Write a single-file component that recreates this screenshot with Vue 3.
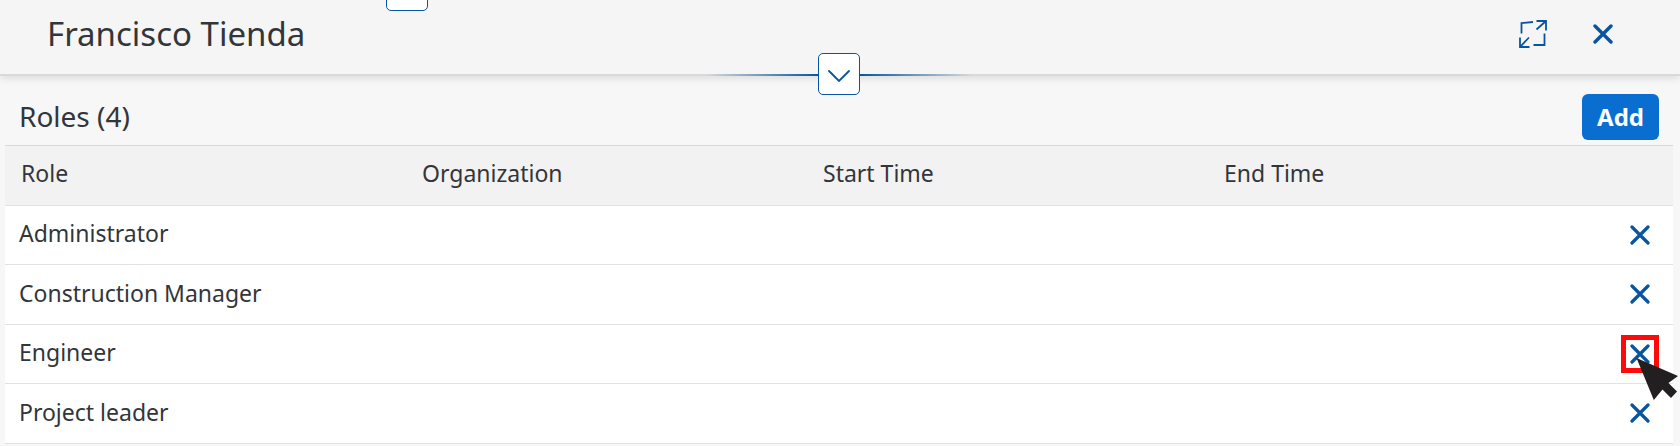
<script setup>
import { ref } from 'vue'

const columns = ['Role', 'Organization', 'Start Time', 'End Time']
const roles = ref([
  { name: 'Administrator' },
  { name: 'Construction Manager' },
  { name: 'Engineer', marked: true },
  { name: 'Project leader' },
])
</script>

<template>
  <div class="page">
    <header class="header">
      <button class="snap snap-top" type="button" aria-label="Collapse previous header"></button>
      <h1 class="title">Francisco Tienda</h1>
      <div class="actions">
        <button class="icon-button" type="button" aria-label="Full screen">
          <svg width="28" height="28" viewBox="0 0 28 28" fill="none" stroke="currentColor" stroke-width="1.8">
            <path d="M2.5 13.5V3L14 2" />
            <path d="M17.5 1H27V10.5M27 1L17.5 9.5" />
            <path d="M25.5 13.5V25H14.5" />
            <path d="M1 17.5V27H10.5M1 27L10 17.5" />
          </svg>
        </button>
        <button class="icon-button" type="button" aria-label="Close">
          <svg width="20" height="20" viewBox="0 0 20 20" fill="none" stroke="currentColor" stroke-width="3.4" stroke-linecap="round">
            <path d="M2 2L18 18M18 2L2 18" />
          </svg>
        </button>
      </div>
      <div class="divider">
        <span class="line line-left"></span>
        <button class="snap" type="button" aria-label="Expand header">
          <svg width="22" height="12" viewBox="0 0 22 12" fill="none" stroke="currentColor" stroke-width="1.8" stroke-linecap="round">
            <path d="M1 1L11 11L21 1" />
          </svg>
        </button>
        <span class="line line-right"></span>
      </div>
    </header>

    <main class="content">
      <div class="toolbar">
        <h2 class="subtitle">Roles ({{ roles.length }})</h2>
        <button class="add" type="button">Add</button>
      </div>
      <table class="table">
        <thead>
          <tr>
            <th v-for="column in columns" :key="column" scope="col">{{ column }}</th>
            <td class="action"></td>
          </tr>
        </thead>
        <tbody>
          <tr v-for="role in roles" :key="role.name">
            <td>{{ role.name }}</td>
            <td></td>
            <td></td>
            <td></td>
            <td class="action">
              <div class="action-box">
                <button class="icon-button" type="button" :aria-label="'Remove ' + role.name">
                  <svg width="20" height="20" viewBox="0 0 20 20" fill="none" stroke="currentColor" stroke-width="3.2" stroke-linecap="round">
                    <path d="M2 2L18 18M18 2L2 18" />
                  </svg>
                </button>
                <span v-if="role.marked" class="marker"></span>
                <svg v-if="role.marked" class="cursor" width="42" height="42" viewBox="0 0 42 42">
                  <path d="M0.5 0L42 18L32.5 25L41 33.5L35 40L26.5 31.5L17.8 42Z" fill="#231f20" />
                </svg>
              </div>
            </td>
          </tr>
        </tbody>
      </table>
    </main>
  </div>
</template>

<style>
body {
  background: #f7f7f7;
}
</style>

<style scoped>
.page {
  overflow: hidden;
  background: #f7f7f7;
  color: #32363a;
  font-family: "Noto Sans", sans-serif;
}

.header {
  position: relative;
  display: flex;
  align-items: center;
  justify-content: space-between;
  height: 67px;
  padding: 0 67px 7px 47px;
  background: #f5f5f5;
  border-bottom: 2px solid #d9d9d9;
  box-shadow: 0 2px 8px rgba(0, 0, 0, 0.12);
}

.title,
.subtitle {
  margin: 0;
  font-weight: 400;
}

.title {
  font-size: 33px;
  line-height: 44px;
}

.actions {
  display: flex;
  align-items: center;
  gap: 46px;
}

.icon-button {
  display: flex;
  padding: 0;
  border: 0;
  background: none;
  color: #0854a0;
}

.snap {
  display: flex;
  align-items: center;
  justify-content: center;
  box-sizing: border-box;
  width: 42px;
  height: 42px;
  padding: 4px 0 0;
  background: #fff;
  border: 1px solid #0854a0;
  border-radius: 5px;
  color: #0854a0;
}

.snap-top {
  position: absolute;
  left: 386px;
  bottom: 63px;
}

.divider {
  position: absolute;
  left: 0;
  right: 2px;
  bottom: -21px;
  display: flex;
  align-items: center;
  justify-content: center;
}

.line {
  width: 112px;
  height: 2px;
  margin-top: 2px;
}

.line-left {
  background: linear-gradient(to left, #0854a0, transparent);
}

.line-right {
  background: linear-gradient(to right, #0854a0, transparent);
}

.content {
  padding: 0 7px 0 5px;
}

.toolbar {
  display: flex;
  align-items: center;
  justify-content: space-between;
  height: 46px;
  padding: 18px 14px 5px;
}

.subtitle {
  padding-bottom: 2px;
  font-size: 28px;
  line-height: 36px;
}

.add {
  height: 46px;
  padding: 0 15px;
  background: #0a6ed1;
  border: 0;
  border-radius: 6px;
  color: #fff;
  font: 700 24px/36px "Noto Sans", sans-serif;
}

.table {
  width: 100%;
  table-layout: fixed;
  border-collapse: separate;
  border-spacing: 0;
  background: #fff;
  border-top: 1px solid #d9d9d9;
  font-size: 23px;
  line-height: 32px;
}

th,
td {
  box-sizing: border-box;
  height: 60px;
  padding: 0 14px 4px;
  border-bottom: 1px solid #e2e2e2;
  text-align: left;
  font-weight: 400;
}

thead th,
thead td {
  padding: 0 16px 5px;
  background: #f2f2f2;
}

tbody tr:nth-child(odd) td {
  height: 59px;
}

.action {
  width: 64px;
}

tbody .action {
  padding: 0 2px 1px 0;
}

.action-box {
  position: relative;
  display: flex;
  justify-content: center;
}

.marker {
  position: absolute;
  top: -9px;
  left: 12px;
  box-sizing: border-box;
  width: 38px;
  height: 38px;
  border: 5px solid #ff0a0a;
}

.cursor {
  position: absolute;
  top: 14px;
  left: 27px;
}
</style>
